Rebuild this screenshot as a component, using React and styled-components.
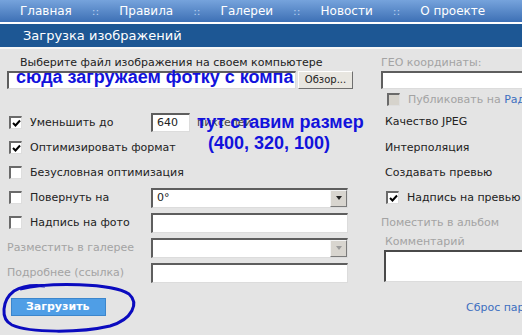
import React from "react";
import styled, { createGlobalStyle } from "styled-components";

const GlobalStyle = createGlobalStyle`
  html, body {
    margin: 0;
    padding: 0;
    background: #e4e4e4;
    overflow: hidden;
  }
  body {
    font-family: "DejaVu Sans", Verdana, sans-serif;
  }
`;

const Page = styled.div`
  position: relative;
  width: 522px;
  height: 335px;
  overflow: hidden;
  background: #e4e4e4;
`;

const Nav = styled.div`
  height: 22px;
  display: flex;
  align-items: center;
  gap: 20px;
  padding-left: 20px;
  background: linear-gradient(#76a3dc, #3d70b5);
  color: #fff;
  font-size: 12px;
  white-space: nowrap;
  border-bottom: 2px solid #fff;
`;

const NavSep = styled.span`
  color: #b8cfee;
  font-size: 11px;
`;

const Header = styled.div`
  height: 23px;
  display: flex;
  align-items: center;
  padding-left: 23px;
  background: #1d5794;
  color: #fff;
  font-size: 13px;
  border-bottom: 2px solid #f6f6f6;
`;

const Body = styled.div`
  display: flex;
  padding: 7px 0 0 7px;
  font-size: 11px;
  color: #222;
`;

const Left = styled.div`
  width: 348px;
  flex-shrink: 0;
`;

const Right = styled.div`
  width: 260px;
  flex-shrink: 0;
  margin-left: 26px;
`;

const Caption = styled.div`
  height: 14px;
  line-height: 14px;
  padding-left: ${(p) => p.$indent || 0}px;
  color: ${(p) => (p.$muted ? "#a3a3a3" : "#222")};
  white-space: nowrap;
`;

const FileRow = styled.div`
  display: flex;
  align-items: center;
  margin-top: 1px;
`;

const Field = styled.div`
  box-sizing: border-box;
  width: ${(p) => p.$w}px;
  height: ${(p) => p.$h || 20}px;
  background: #fff;
  border-style: solid;
  border-width: 2px 1px 1px 2px;
  border-color: #5e5e5e #dcdcdc #dcdcdc #5e5e5e;
  padding: 0 4px;
  font-size: 11px;
  line-height: 16px;
  color: #222;
  flex-shrink: 0;
`;

const BrowseButton = styled.div`
  box-sizing: border-box;
  width: 55px;
  height: 18px;
  margin-left: 2px;
  background: #e8e6e0;
  border: 1px solid;
  border-color: #fff #6f6f6f #6f6f6f #fff;
  font-size: 10px;
  line-height: 16px;
  text-align: center;
  color: #222;
`;

const Rows = styled.div`
  margin-top: 21px;
`;

const Row = styled.div`
  display: grid;
  grid-template-columns: 144px 1fr;
  align-items: center;
  height: 25px;
`;

const Label = styled.label`
  display: flex;
  align-items: center;
  gap: 8px;
  padding-left: ${(p) => (p.$box ? 2 : 0)}px;
  color: ${(p) => (p.$muted ? "#a3a3a3" : "#222")};
  white-space: nowrap;
`;

const Box = styled.span`
  box-sizing: border-box;
  width: 13px;
  height: 13px;
  display: inline-flex;
  align-items: center;
  justify-content: center;
  background: ${(p) => (p.$disabled ? "#d6d3cc" : "#fff")};
  border-style: solid;
  border-width: 2px 1px 1px 2px;
  border-color: #6a6a6a #dedede #dedede #6a6a6a;
  flex-shrink: 0;
`;

const Check = ({ on, disabled }) => (
  <Box $disabled={disabled}>
    {on && (
      <svg width="9" height="9" viewBox="0 0 9 9">
        <path d="M1 4 L3.5 6.5 L8 1.5" stroke="#000" strokeWidth="2" fill="none" />
      </svg>
    )}
  </Box>
);

const Control = styled.div`
  display: flex;
  align-items: center;
  gap: 7px;
`;

const Unit = styled.span`
  color: #444;
`;

const Select = styled.div`
  box-sizing: border-box;
  width: 197px;
  height: 20px;
  display: flex;
  background: #fff;
  border-style: solid;
  border-width: 2px 1px 1px 2px;
  border-color: #5e5e5e #dcdcdc #dcdcdc #5e5e5e;
`;

const SelectValue = styled.span`
  flex: 1;
  padding-left: 4px;
  line-height: 16px;
  font-size: 11px;
`;

const Arrow = styled.span`
  width: 15px;
  display: flex;
  align-items: center;
  justify-content: center;
  background: #d8d5cf;
  border: 1px solid;
  border-color: #f4f4f4 #7a7a7a #7a7a7a #f4f4f4;
  &::after {
    content: "";
    border-left: 3px solid transparent;
    border-right: 3px solid transparent;
    border-top: 4px solid ${(p) => (p.$disabled ? "#9a9a9a" : "#222")};
  }
`;

const Item = styled.div`
  height: ${(p) => p.$h || 25}px;
  display: flex;
  align-items: center;
  gap: 8px;
  padding-left: ${(p) => p.$indent || 0}px;
  color: ${(p) => (p.$muted ? "#a3a3a3" : "#222")};
  white-space: nowrap;
`;

const Link = styled.span`
  color: #3d6fc0;
`;

const CommentBox = styled.div`
  box-sizing: border-box;
  width: 200px;
  height: 32px;
  margin-left: 3px;
  margin-top: 2px;
  background: #fff;
  border-style: solid;
  border-width: 2px 1px 1px 2px;
  border-color: #4a4a4a #dcdcdc #dcdcdc #4a4a4a;
`;

const Footer = styled.div`
  display: flex;
  align-items: center;
  justify-content: space-between;
  padding: 13px 0 0 11px;
  width: 580px;
`;

const SubmitButton = styled.div`
  box-sizing: border-box;
  width: 95px;
  height: 18px;
  background: #4f9ee6;
  border: 1px solid #3c86cc;
  color: #fff;
  font-weight: bold;
  font-size: 11px;
  line-height: 16px;
  padding-left: 14px;
`;

const ResetLink = styled.span`
  color: #3d6fc0;
  font-size: 11px;
  margin-right: 18px;
`;

const Note = styled.div`
  position: absolute;
  left: ${(p) => p.$x}px;
  top: ${(p) => p.$y}px;
  font-family: "Liberation Sans", Arial, sans-serif;
  font-weight: bold;
  font-size: 18px;
  line-height: 18px;
  color: #1212dc;
  white-space: nowrap;
`;

const Scribble = styled.svg`
  position: absolute;
  left: 0;
  top: 281px;
`;

export default function App() {
  return (
    <Page>
      <GlobalStyle />
      <Nav>
        <span>Главная</span>
        <NavSep>::</NavSep>
        <span>Правила</span>
        <NavSep>::</NavSep>
        <span>Галереи</span>
        <NavSep>::</NavSep>
        <span>Новости</span>
        <NavSep>::</NavSep>
        <span>О проекте</span>
      </Nav>
      <Header>Загрузка изображений</Header>
      <Body>
        <Left>
          <Caption $indent={13}>Выберите файл изображения на своем компьютере</Caption>
          <FileRow>
            <Field $w={289} $h={18} />
            <BrowseButton>Обзор...</BrowseButton>
          </FileRow>
          <Rows>
            <Row>
              <Label $box><Check on />Уменьшить до</Label>
              <Control>
                <Field $w={39} $h={19}>640</Field>
                <Unit>пикселей</Unit>
              </Control>
            </Row>
            <Row>
              <Label $box><Check on />Оптимизировать формат</Label>
            </Row>
            <Row>
              <Label $box><Check />Безусловная оптимизация</Label>
            </Row>
            <Row>
              <Label $box><Check />Повернуть на</Label>
              <Select>
                <SelectValue>0°</SelectValue>
                <Arrow />
              </Select>
            </Row>
            <Row>
              <Label $box><Check />Надпись на фото</Label>
              <Field $w={197} />
            </Row>
            <Row>
              <Label $muted>Разместить в галерее</Label>
              <Select>
                <SelectValue />
                <Arrow $disabled />
              </Select>
            </Row>
            <Row>
              <Label $muted>Подробнее (ссылка)</Label>
              <Field $w={197} />
            </Row>
          </Rows>
        </Left>
        <Right>
          <Caption $muted>ГЕО координаты:</Caption>
          <FileRow>
            <Field $w={220} $h={18} />
          </FileRow>
          <Item $indent={6} $h={20} $muted>
            <Check disabled />
            <span>Публиковать на <Link>Радар</Link></span>
          </Item>
          <Item $indent={4} $h={25}>Качество JPEG</Item>
          <Item $indent={4} $h={26}>Интерполяция</Item>
          <Item $indent={4}>Создавать превью</Item>
          <Item $indent={5}>
            <Check on />
            <span>Надпись на превью</span>
          </Item>
          <Item $muted $h={24}>Поместить в альбом</Item>
          <Item $muted $indent={4} $h={14}>Комментарий</Item>
          <CommentBox />
        </Right>
      </Body>
      <Footer>
        <SubmitButton>Загрузить</SubmitButton>
        <ResetLink>Сброс параметров</ResetLink>
      </Footer>
      <Note $x={16} $y={68}>сюда загружаем фотку с компа</Note>
      <Note $x={197} $y={113}>тут ставим размер</Note>
      <Note $x={208} $y={134}>(400, 320, 100)</Note>
      <Scribble width="140" height="54" viewBox="0 0 140 54">
        <path
          d="M20 8 C50 1 112 2 129 13 C139 22 133 38 110 45 C80 52 30 52 12 44 C0 38 2 19 14 10 C22 5 35 4 45 5"
          stroke="#0b0bbf"
          strokeWidth="3"
          fill="none"
        />
      </Scribble>
    </Page>
  );
}
